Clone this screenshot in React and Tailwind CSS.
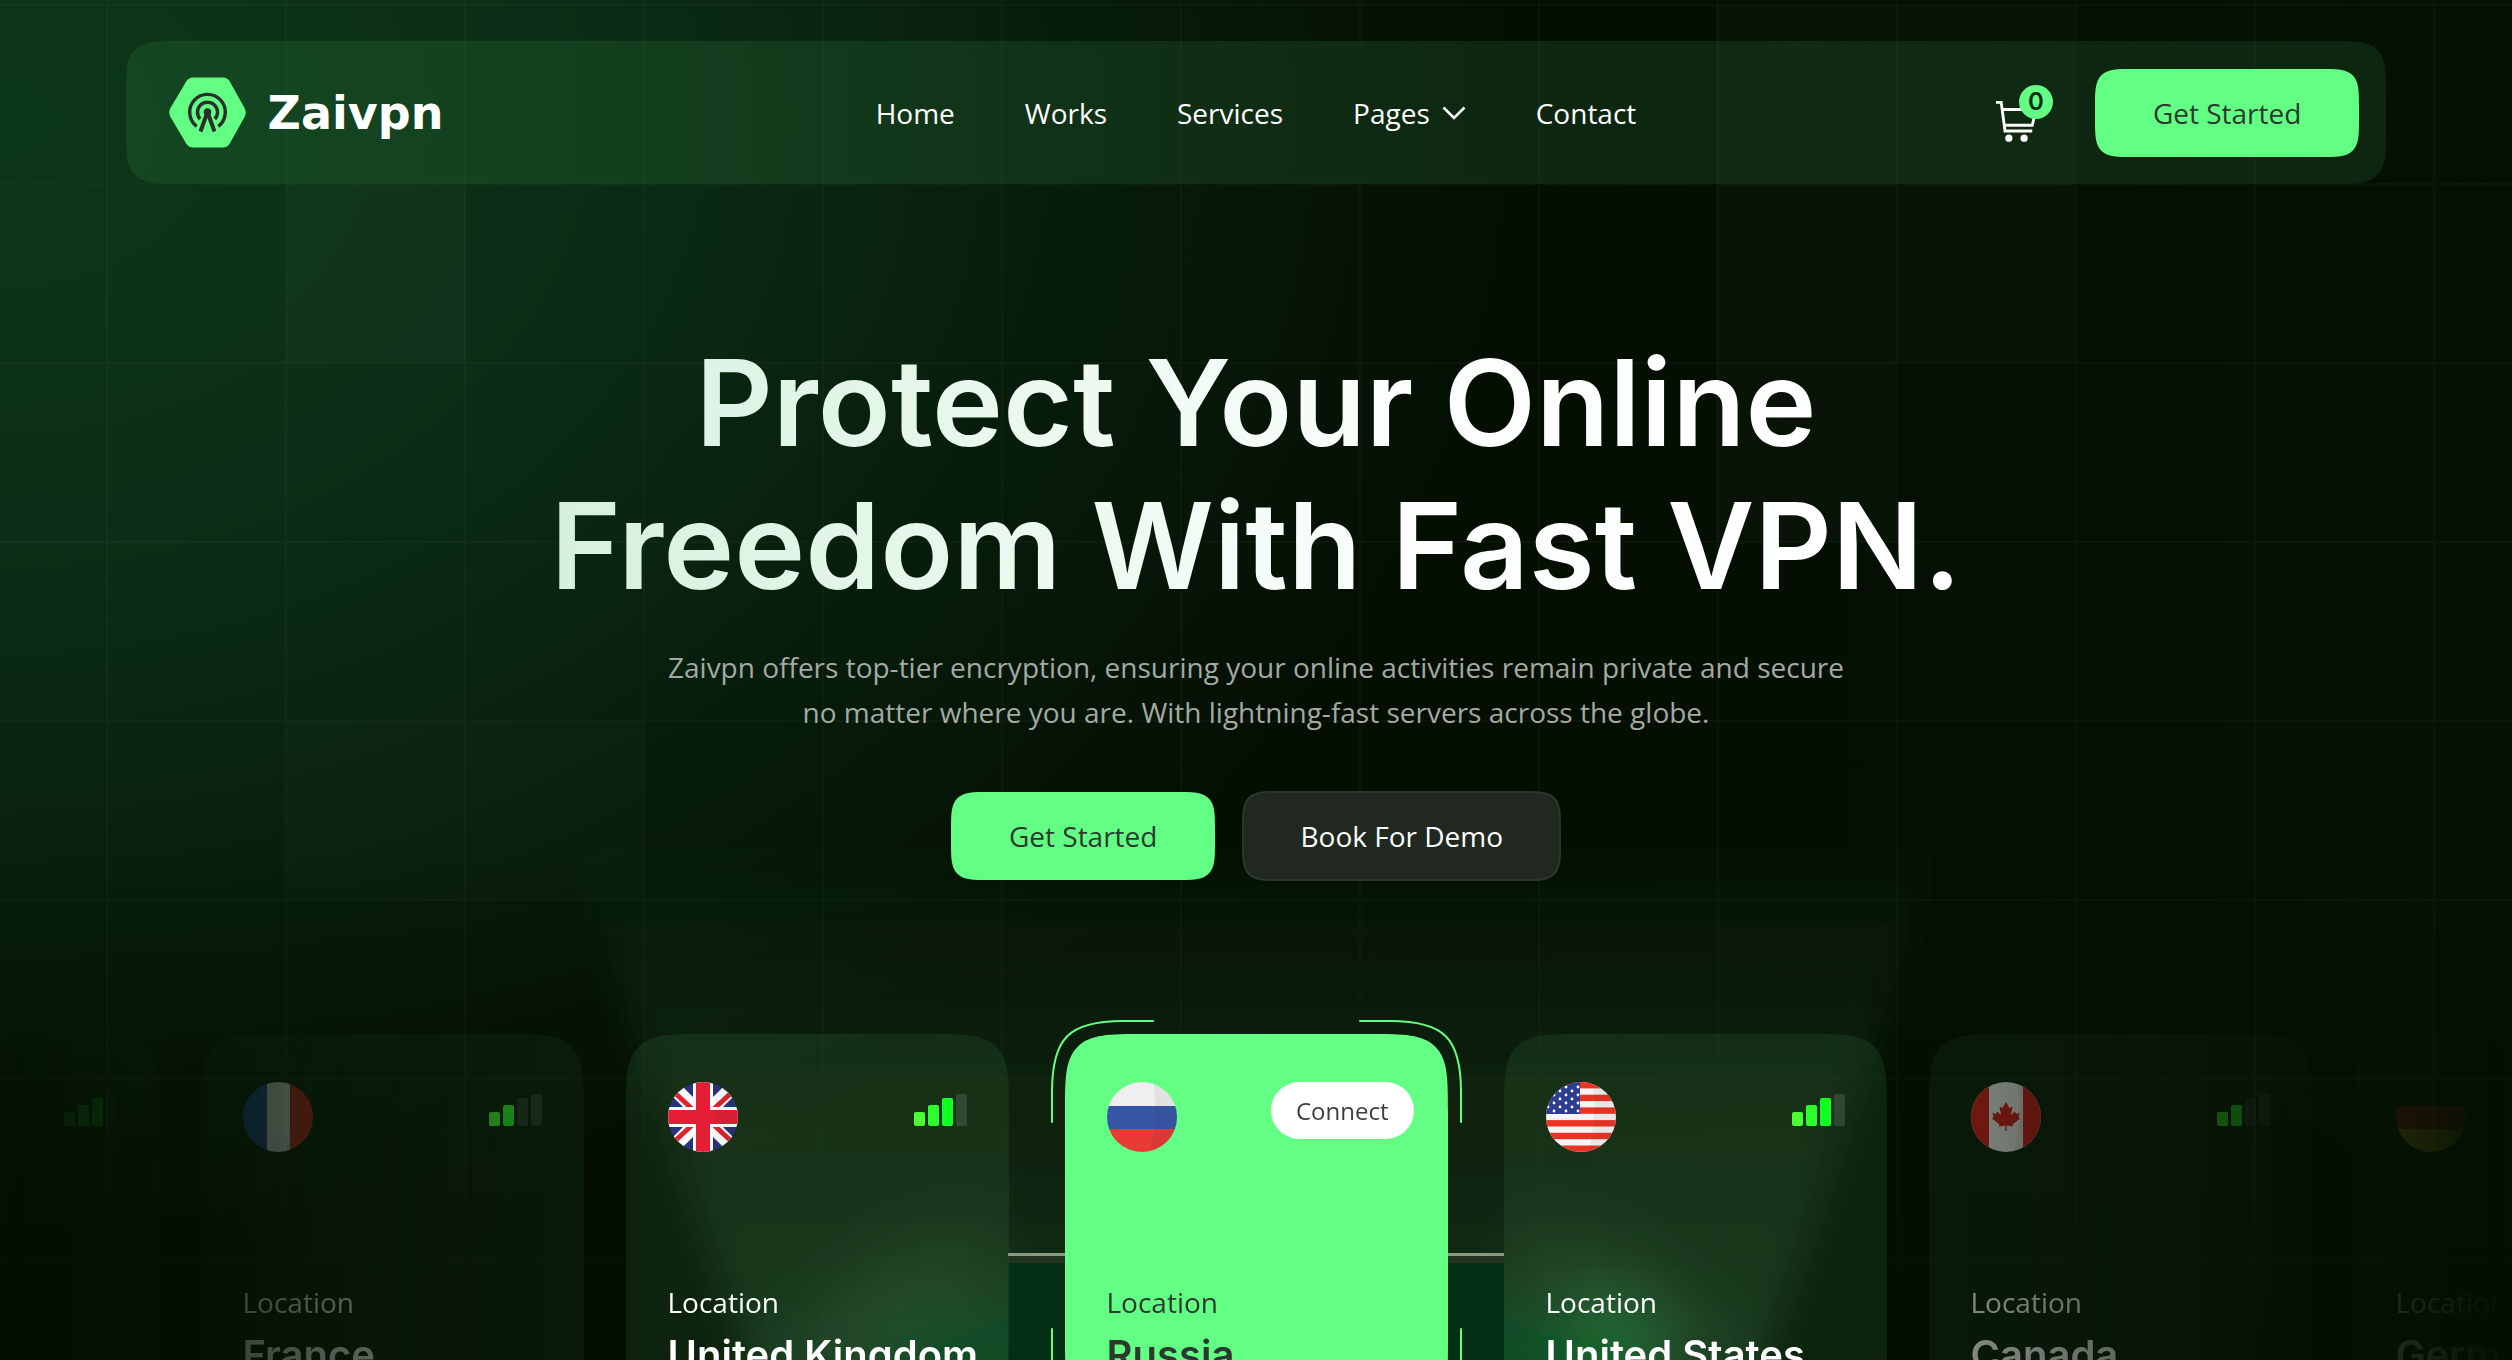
import clsx from "clsx";

const NAV_LINKS = ["Home", "Works", "Services", "Pages", "Contact"];

const LOCATIONS = [
  { flag: "japan", signal: 3 },
  { name: "France", flag: "france", signal: 2 },
  { name: "United Kingdom", flag: "uk", signal: 3 },
  { name: "Russia", flag: "russia", active: true },
  { name: "United States", flag: "usa", signal: 3 },
  { name: "Canada", flag: "canada", signal: 2 },
  { name: "Germany", flag: "germany", signal: 3 },
];

const BARS = [
  { height: "h-3.5", color: "bg-[#4cff34]" },
  { height: "h-[21px]", color: "bg-[#2cff2e]" },
  { height: "h-7", color: "bg-[#12ff24]" },
  { height: "h-8", color: "bg-[#12ff24]" },
];

const STARS = [0, 1, 2, 3].flatMap((row) =>
  [0, 1, 2, 3, 4, 5].map((col) => ({ x: 2 + col * 6, y: (col % 2 ? 5 : 9) + row * 8 }))
);

const FLAGS = {
  japan: (
    <>
      <rect width="70" height="70" fill="#f0f0f0" />
      <circle cx="35" cy="35" r="15" fill="#d80027" />
    </>
  ),
  france: (
    <>
      <rect width="24" height="70" fill="#2b55a8" />
      <rect x="24" width="23" height="70" fill="#f0f0f0" />
      <rect x="47" width="23" height="70" fill="#e6302d" />
    </>
  ),
  uk: (
    <>
      <rect width="70" height="70" fill="#29337a" />
      <path d="M0 0L70 70M70 0L0 70" stroke="#fff" strokeWidth="14" />
      <path d="M8 12L35 37M62 58L35 33M62 12L35 37M8 58L35 33" stroke="#e0232e" strokeWidth="5" />
      <path d="M35 0V70M0 35H70" stroke="#fff" strokeWidth="20" />
      <path d="M35 0V70M0 35H70" stroke="#e41e35" strokeWidth="14" />
    </>
  ),
  russia: (
    <>
      <rect width="70" height="24" fill="#f0eeee" />
      <rect y="24" width="70" height="23" fill="#3757a6" />
      <rect y="47" width="70" height="23" fill="#e83b36" />
    </>
  ),
  usa: (
    <>
      <rect width="70" height="70" fill="#f4f4f6" />
      {[0, 1, 2, 3, 4, 5].map((i) => (
        <rect key={i} y={i * 12.7} width="70" height="6.4" fill="#ea3323" />
      ))}
      <rect width="34" height="32" fill="#2e3d94" />
      {STARS.filter((s) => s.y < 32).map((s) => (
        <circle key={`${s.x}-${s.y}`} cx={s.x} cy={s.y} r="1.4" fill="#fff" />
      ))}
    </>
  ),
  canada: (
    <>
      <rect width="70" height="70" fill="#f0f0f0" />
      <rect width="18" height="70" fill="#d8201c" />
      <rect x="52" width="18" height="70" fill="#d8201c" />
      <path
        d="M35 20L38.500 26L41.500 24.500L40 33L44 29.500L45 32L48.500 31L47.500 35L49 36.500L41.500 42.500L42 44.500L35.700 43.500V49H34.300V43.500L28 44.500L28.500 42.500L21 36.500L22.500 35L21.500 31L25 32L26 29.500L30 33L28.500 24.500L31.500 26Z"
        fill="#d8201c"
      />
    </>
  ),
  germany: (
    <>
      <rect width="70" height="24" fill="#0b0b0b" />
      <rect y="24" width="70" height="23" fill="#dd2a1b" />
      <rect y="47" width="70" height="23" fill="#ffd42a" />
    </>
  ),
};

const Flag = ({ code }) => (
  <div className="size-[70px] rounded-full overflow-hidden">
    <svg viewBox="0 0 70 70" className="size-full" aria-hidden="true">
      {FLAGS[code]}
      <path d="M46 0Q52 35 42 70H70V0Z" fill="#1a1a1a" opacity="0.060" />
    </svg>
  </div>
);

const Signal = ({ level }) => (
  <div className="h-14 flex items-center">
    <div className="flex items-end gap-[3px]">
      {BARS.map((bar, i) => (
        <span
          key={i}
          className={clsx("w-[11px] rounded-[2px]", bar.height, i < level ? bar.color : "bg-white/12")}
        />
      ))}
    </div>
  </div>
);

const Logo = () => (
  <a href="#" className="flex items-center gap-[22px] ml-4">
    <svg viewBox="0 0 77 71" className="w-[77px] h-[71px]" aria-hidden="true">
      <path
        d="M24 0.500H54Q58 0.500 60.500 4L75.500 31Q78 35.500 75.500 40L60.500 67Q58 70.500 54 70.500H24Q20 70.500 17.500 67L1.500 40Q-1 35.500 1.500 31L17.500 4Q20 0.500 24 0.500Z"
        fill="#62ff84"
      />
      <g fill="none" stroke="#2b2f2c" strokeWidth="3.400">
        <path d="M27.700 49.300A17.800 17.800 0 1 1 49.300 49.300" />
        <path d="M31.100 42A10 10 0 1 1 45.900 42" />
        <path d="M31.500 54.500L37.800 37M45.500 54.500L39.200 37" strokeWidth="4" />
      </g>
      <circle cx="38.500" cy="35" r="3.800" fill="#2b2f2c" />
    </svg>
    <span className="font-['DejaVu_Sans',sans-serif] font-bold text-[46px] leading-[60px] text-white">Zaivpn</span>
  </a>
);

const CartIcon = () => (
  <svg viewBox="0 0 44 46" className="w-[42px] h-11" fill="none" stroke="#fff" strokeWidth="3" aria-hidden="true">
    <path d="M1 3.500H6.500L10.500 33.500H39" />
    <path d="M8 11H43L39 27.500H10" />
    <circle cx="14.500" cy="41" r="3.800" fill="#fff" stroke="none" />
    <circle cx="30.500" cy="41" r="3.800" fill="#fff" stroke="none" />
  </svg>
);

const PrimaryButton = ({ children }) => (
  <button className="h-[88px] px-[58px] rounded-[40px] [corner-shape:squircle] bg-[#62ff84] text-[28px] font-medium text-[#2b3a2f] hover:bg-[#4ff074] transition">
    {children}
  </button>
);

const Header = () => (
  <header className="grid grid-cols-[1fr_auto_1fr] items-center h-[143px] px-[27px] rounded-[56px] [corner-shape:squircle] bg-linear-to-r from-[#2d7a3d]/25 to-[#2d7a3d]/20">
    <Logo />
    <nav className="flex items-center gap-[70px] text-[28px] leading-10 text-white">
      {NAV_LINKS.map((link) => (
        <a key={link} href="#" className="flex items-center gap-3">
          {link}
          {link === "Pages" && (
            <svg viewBox="0 0 24 14" className="w-6 h-3.5" fill="none" stroke="#fff" strokeWidth="2.600" aria-hidden="true">
              <path d="M1.500 1.500L12 12L22.500 1.500" />
            </svg>
          )}
        </a>
      ))}
    </nav>
    <div className="flex items-center justify-end gap-[58px]">
      <button aria-label="Cart" className="relative mt-4">
        <CartIcon />
        <span className="absolute -top-3.5 -right-4 size-[34px] rounded-full bg-[#62ff84] flex items-center justify-center font-['Inter',sans-serif] text-2xl font-semibold text-[#0c2a12]">
          0
        </span>
      </button>
      <PrimaryButton>Get Started</PrimaryButton>
    </div>
  </header>
);

const Hero = () => (
  <section className="flex flex-col items-center text-center pt-[147px]">
    <h1 className="font-['Inter',sans-serif] font-semibold text-[120px] leading-[143px] bg-linear-to-r from-[#d6f0df] via-[#fbfefc] via-60% to-white bg-clip-text text-transparent">
      Protect Your Online
      <br />
      Freedom With Fast VPN.
    </h1>
    <p className="mt-7 text-[28px] leading-[45px] text-[#a3aaa3] max-w-[1190px]">
      Zaivpn offers top-tier encryption, ensuring your online activities remain private and secure no matter where you
      are. With lightning-fast servers across the globe.
    </p>
    <div className="mt-14 flex items-center gap-[27px]">
      <PrimaryButton>Get Started</PrimaryButton>
      <button className="h-[90px] px-14 rounded-[40px] [corner-shape:squircle] border-2 border-[#2c352d] bg-[#20281f] text-[28px] font-medium text-white hover:bg-[#2a332a] transition">
        Book For Demo
      </button>
    </div>
  </section>
);

// Corner brackets drawn around the selected location
const Brackets = () => (
  <svg viewBox="0 0 412 412" className="absolute inset-0 size-full" fill="none" stroke="#62ff84" strokeWidth="2" aria-hidden="true">
    <path d="M1 103V72C1 18 18 1 72 1H103" />
    <path d="M1 103V72C1 18 18 1 72 1H103" transform="rotate(90 206 206)" />
    <path d="M1 103V72C1 18 18 1 72 1H103" transform="rotate(180 206 206)" />
    <path d="M1 103V72C1 18 18 1 72 1H103" transform="rotate(270 206 206)" />
  </svg>
);

const LocationCard = ({ item }) => (
  <div className={clsx("relative shrink-0", item.active && "px-3.5")}>
    {item.active && (
      <div className="absolute -top-3.5 inset-x-0 aspect-square">
        <Brackets />
      </div>
    )}
    <article
      className={clsx(
        "relative size-[383px] px-[42px] pt-12 rounded-[80px] [corner-shape:squircle]",
        item.active ? "bg-[#62ff84] text-[#2b3a2f]" : "bg-[#3d8048]/18 text-white"
      )}
    >
      <div className="flex items-start justify-between">
        <Flag code={item.flag} />
        {item.active ? (
          <button className="h-[57px] px-[25px] -mr-2 rounded-full bg-white text-2xl text-[#3a403b]">Connect</button>
        ) : (
          <Signal level={item.signal} />
        )}
      </div>
      {item.name && (
        <>
          <p className="mt-[130px] text-[28px] leading-10">Location</p>
          <h2 className="mt-2 font-['Inter',sans-serif] font-semibold text-[40px] leading-[50px] whitespace-nowrap">
            {item.name}
          </h2>
        </>
      )}
    </article>
  </div>
);

const Locations = () => (
  <section className="relative mt-[133px] pt-5 pb-16 flex justify-center gap-[42px] [mask-image:linear-gradient(90deg,transparent,#0000008f_24%,#000_24%,#000_76%,#0000008f_76%,transparent)]">
    {LOCATIONS.map((item) => (
      <LocationCard key={item.flag} item={item} />
    ))}
  </section>
);

const Backdrop = () => (
  <svg
    viewBox="0 0 2512 1360"
    preserveAspectRatio="xMidYMin slice"
    className="absolute inset-0 size-full"
    aria-hidden="true"
  >
    <defs>
      <radialGradient id="wash" gradientUnits="userSpaceOnUse" cx="0" cy="0" r="1" gradientTransform="translate(0 120) scale(1560 1180)">
        <stop offset="0" stopColor="#0c3619" />
        <stop offset="0.350" stopColor="#0b2f16" />
        <stop offset="0.700" stopColor="#071c0b" />
        <stop offset="0.950" stopColor="#051004" />
        <stop offset="1" stopColor="#051004" stopOpacity="0" />
      </radialGradient>
      <linearGradient id="side" x1="0" x2="1">
        <stop offset="0" stopColor="#041002" />
        <stop offset="0.600" stopColor="#040f02" />
        <stop offset="1" stopColor="#061106" />
      </linearGradient>
      <linearGradient id="floor" x1="0" x2="0" y1="0" y2="1">
        <stop offset="0" stopColor="#040f02" stopOpacity="0" />
        <stop offset="1" stopColor="#040f02" stopOpacity="0.850" />
      </linearGradient>
      <linearGradient id="beam" x1="0" x2="0" y1="0" y2="1">
        <stop offset="0" stopColor="#2c6a3c" stopOpacity="0" />
        <stop offset="0.400" stopColor="#2f5c38" stopOpacity="0.200" />
        <stop offset="1" stopColor="#2f7040" stopOpacity="0.320" />
      </linearGradient>
      <pattern id="grid" x="106" y="4" width="179" height="179" patternUnits="userSpaceOnUse">
        <path d="M1 0V179M0 1H179" stroke="#fff" strokeOpacity="0.024" strokeWidth="2" />
      </pattern>
      <filter id="soft" x="-30%" y="-30%" width="160%" height="160%">
        <feGaussianBlur stdDeviation="18" />
      </filter>
      <filter id="softer" x="-100%" y="-100%" width="300%" height="300%">
        <feGaussianBlur stdDeviation="36" />
      </filter>
    </defs>
    <rect width="2512" height="1360" fill="url(#side)" />
    <rect width="2512" height="1360" fill="url(#wash)" />
    <g fill="#fff" fillOpacity="0.020">
      <rect x="286" y="184" width="179" height="179" />
      <rect x="286" y="721" width="358" height="179" fillOpacity="0.014" />
      <rect x="1716" y="5" width="358" height="358" />
      <rect x="1716" y="363" width="179" height="179" />
    </g>
    <rect width="2512" height="1360" fill="url(#grid)" />
    <rect y="850" width="2512" height="510" fill="url(#floor)" />
    <path d="M570 830L630 1020L760 1400H1752L1882 1020L1942 830Z" fill="url(#beam)" filter="url(#soft)" />
    <g filter="url(#softer)">
      <path d="M880 1300H1632L1660 1400H852Z" fill="#0a5a24" opacity="0.550" />
      <path d="M1000 1255Q850 1270 800 1380M1512 1255Q1662 1270 1712 1380" fill="none" stroke="#5b8a64" strokeWidth="44" opacity="0.240" />
      <circle cx="1612" cy="1345" r="44" fill="#0d8a36" opacity="0.700" />
    </g>
    <rect x="1008" y="1263" width="496" height="97" fill="#052f14" />
    <rect x="1008" y="1254" width="496" height="9" fill="#22331f" />
    <rect x="1008" y="1253" width="496" height="3" fill="#8a9c80" />
  </svg>
);

export default function App() {
  return (
    <div className="relative h-screen overflow-hidden bg-[#040f02] font-['Open_Sans',sans-serif]">
      <Backdrop />
      <div className="relative">
        <div className="px-[5%] pt-[41px]">
          <Header />
          <Hero />
        </div>
        <Locations />
      </div>
    </div>
  );
}
